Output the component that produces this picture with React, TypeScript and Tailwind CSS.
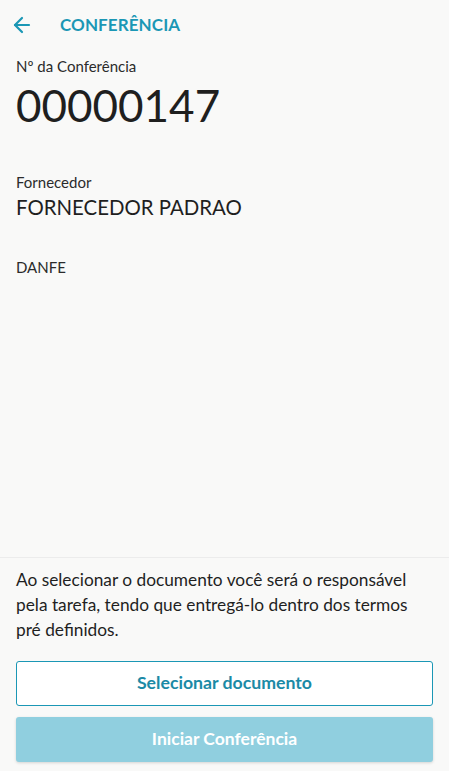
import { ArrowLeft } from 'lucide-react'

function Field({ label, value, size }: { label: string; value?: string; size: 'lg' | 'md' }) {
  return (
    <div>
      <div className="text-[15px] leading-[18px] text-[#2b2b2b]">{label}</div>
      {value && (
        <div
          className={
            size === 'lg'
              ? 'text-[44px] leading-[52px] text-[#1f1f1f] mt-[4px]'
              : 'text-[20.4px] leading-[26px] text-[#1f1f1f] mt-[3px]'
          }
        >
          {value}
        </div>
      )}
    </div>
  )
}

export default function App() {
  return (
    <div
      className="w-[449px] h-[771px] bg-[#f9f9f8] flex flex-col text-[#222]"
      style={{ fontFamily: 'Lato, "Open Sans", sans-serif' }}
    >
      {/* Header */}
      <header className="h-[50px] flex items-center px-[10px] gap-[26px]">
        <ArrowLeft className="w-[24px] h-[24px] text-[#1b97b5]" strokeWidth={2.2} />
        <h1 className="text-[17px] font-bold tracking-[0.1px] text-[#1b97b5]">CONFERÊNCIA</h1>
      </header>

      {/* Content */}
      <main className="flex-1 px-[16px] pt-[7px] flex flex-col">
        <Field label="Nº da Conferência" value="00000147" size="lg" />
        <div className="mt-[42px]">
          <Field label="Fornecedor" value="FORNECEDOR PADRAO" size="md" />
        </div>
        <div className="mt-[38px]">
          <Field label="DANFE" size="md" />
        </div>
      </main>

      {/* Footer */}
      <footer className="border-t border-[#ececec] px-[16px] pt-[9px] pb-[9px]">
        <p className="text-[17.3px] leading-[25px] text-[#1f1f1f]">
          Ao selecionar o documento você será o responsável pela tarefa, tendo que entregá-lo dentro dos
          termos
          <br />
          pré definidos.
        </p>
        <button className="mt-[19px] w-full h-[45px] bg-white border border-[#1b97b5] rounded-[3px] text-[17.7px] font-bold text-[#1b8aa6]">
          Selecionar documento
        </button>
        <button className="mt-[11px] w-full h-[45px] bg-[#90cfdf] rounded-[3px] text-[17.5px] font-bold text-white shadow-[0_1px_3px_rgba(0,0,0,0.15)]">
          Iniciar Conferência
        </button>
      </footer>
    </div>
  )
}
